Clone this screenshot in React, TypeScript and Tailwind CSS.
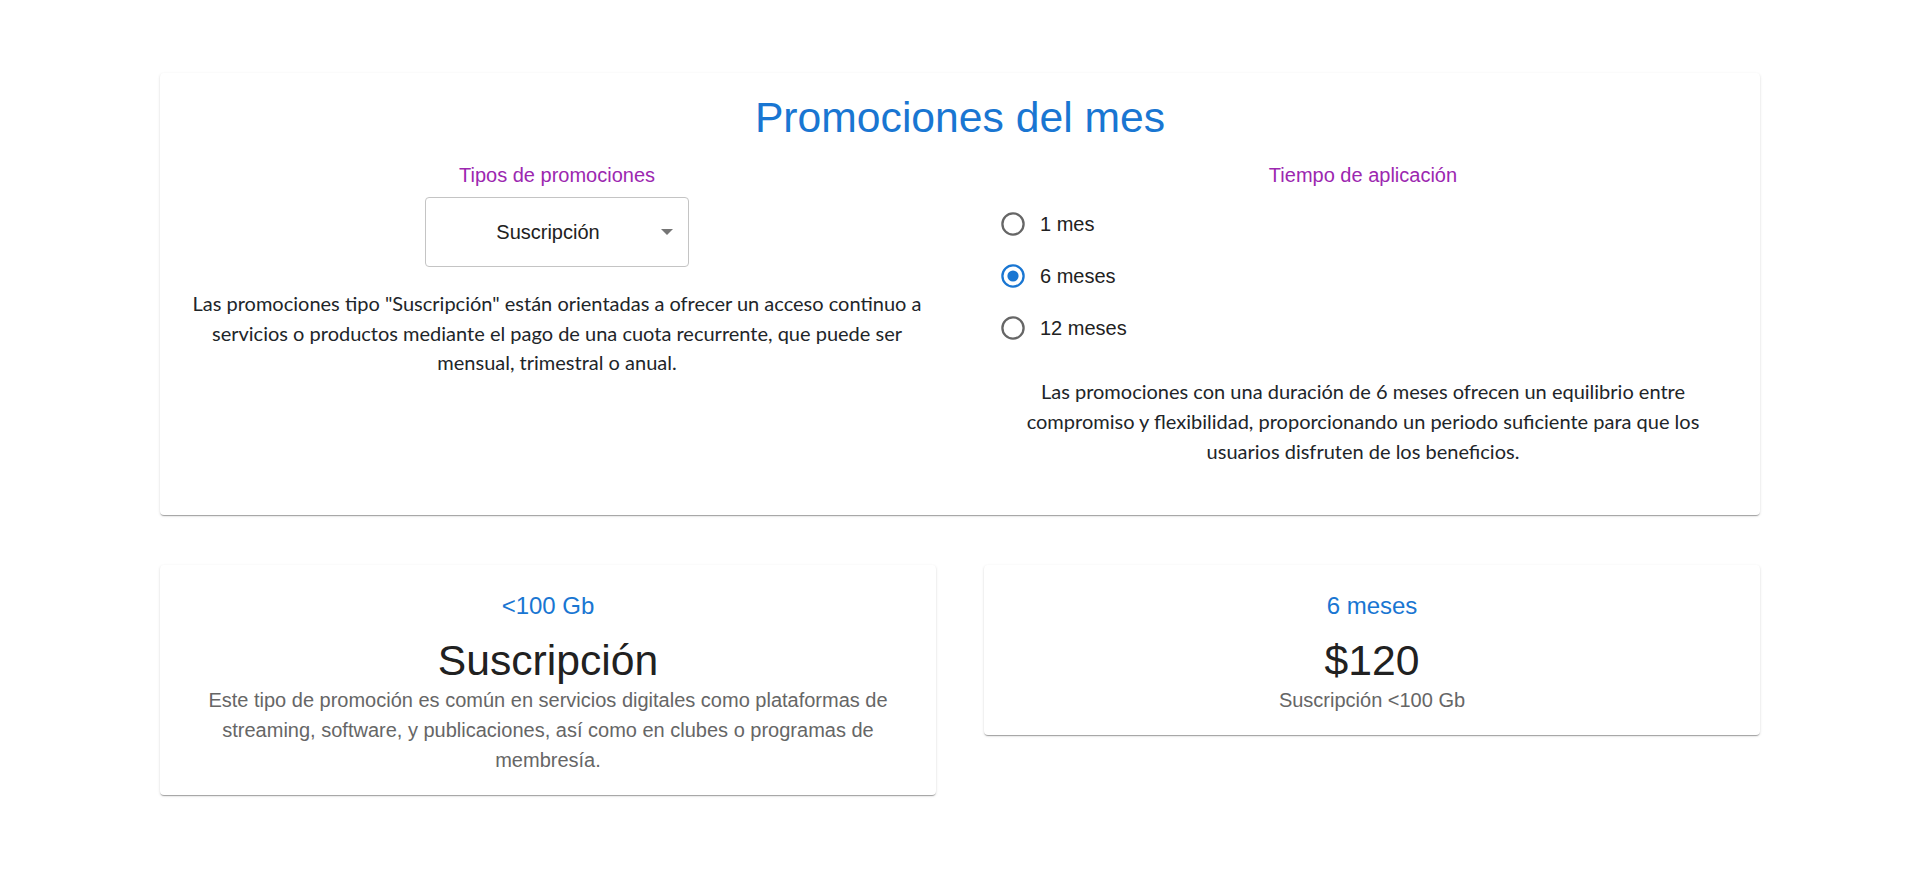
import { useState } from 'react';

const periodos = [
  { id: '1', label: '1 mes' },
  { id: '6', label: '6 meses' },
  { id: '12', label: '12 meses' },
];

const cardShadow =
  'shadow-[0px_2px_1px_-1px_rgba(0,0,0,0.2),0px_1px_1px_0px_rgba(0,0,0,0.14),0px_1px_3px_0px_rgba(0,0,0,0.12)]';

function RadioIcon({ checked }: { checked: boolean }) {
  return (
    <svg width="28" height="28" viewBox="0 0 28 28">
      <circle
        cx="14"
        cy="14"
        r="10.6"
        fill="none"
        stroke={checked ? '#1976d2' : '#666666'}
        strokeWidth="2.3"
      />
      {checked && <circle cx="14" cy="14" r="5.6" fill="#1976d2" />}
    </svg>
  );
}

export default function App() {
  const [periodo, setPeriodo] = useState('6');

  return (
    <div className="min-h-screen bg-white px-[160px] pt-[73px] pb-[60px] font-['Liberation_Sans',Arial,sans-serif]">
      {/* Selección de promoción */}
      <div className={`bg-white rounded-[4px] ${cardShadow} pt-[20px] pb-[49px]`}>
        <h1 className="text-center text-[42.67px] leading-[49px] text-[#1976d2]">Promociones del mes</h1>

        <div className="grid grid-cols-2 -mx-[6px] mt-[18px]">
          {/* Tipos */}
          <div className="flex flex-col items-center px-4">
            <span className="text-[20px] leading-[30px] text-[#9c27b0]">Tipos de promociones</span>
            <button className="relative mt-[7px] w-[264px] h-[70px] border border-[#c4c4c4] rounded-[4px] pl-[14px] pr-[32px] text-center text-[20px] text-[#212121]">
              Suscripción
              <svg
                className="absolute right-[15px] top-1/2 -translate-y-1/2"
                width="12"
                height="6"
                viewBox="0 0 12 6"
              >
                <path d="M0 0h12L6 6z" fill="#757575" />
              </svg>
            </button>
            <p className="mt-[22px] max-w-[745px] text-center font-['Lato',sans-serif] text-[20px] leading-[29.5px] text-[#212529]">
              Las promociones tipo "Suscripción" están orientadas a ofrecer un acceso continuo a servicios o
              productos mediante el pago de una cuota recurrente, que puede ser mensual, trimestral o anual.
            </p>
          </div>

          {/* Tiempo */}
          <div className="flex flex-col px-4">
            <span className="text-center text-[20px] leading-[30px] text-[#9c27b0]">Tiempo de aplicación</span>
            <div className="mt-[8px] flex flex-col pl-[23px]">
              {periodos.map((p) => (
                <label key={p.id} className="flex items-center h-[52px] gap-[13px] cursor-pointer w-fit">
                  <input
                    type="radio"
                    name="periodo"
                    className="hidden"
                    checked={periodo === p.id}
                    onChange={() => setPeriodo(p.id)}
                  />
                  <RadioIcon checked={periodo === p.id} />
                  <span className="text-[20px] leading-[30px] text-[#212121]">{p.label}</span>
                </label>
              ))}
            </div>
            <p className="mt-[22px] mx-auto max-w-[745px] text-center font-['Lato',sans-serif] text-[20px] leading-[30px] text-[#212529]">
              Las promociones con una duración de 6 meses ofrecen un equilibrio entre compromiso y flexibilidad,
              proporcionando un periodo suficiente para que los usuarios disfruten de los beneficios.
            </p>
          </div>
        </div>
      </div>

      {/* Resumen */}
      <div className="grid grid-cols-2 gap-[48px] mt-[50px] items-start">
        <div className={`bg-white rounded-[4px] ${cardShadow} px-4 pt-[25px] pb-[20px] text-center`}>
          <div className="text-[24px] leading-[32px] text-[#1976d2]">&lt;100 Gb</div>
          <div className="mt-[14px] text-[42.67px] leading-[49px] text-[#212121]">Suscripción</div>
          <p className="text-[20px] leading-[30px] text-[#666666]">
            Este tipo de promoción es común en servicios digitales como plataformas de streaming, software, y
            publicaciones, así como en clubes o programas de membresía.
          </p>
        </div>
        <div className={`bg-white rounded-[4px] ${cardShadow} px-4 pt-[25px] pb-[20px] text-center`}>
          <div className="text-[24px] leading-[32px] text-[#1976d2]">6 meses</div>
          <div className="mt-[14px] text-[42.67px] leading-[49px] text-[#212121]">$120</div>
          <p className="text-[20px] leading-[30px] text-[#666666]">Suscripción &lt;100 Gb</p>
        </div>
      </div>
    </div>
  );
}
